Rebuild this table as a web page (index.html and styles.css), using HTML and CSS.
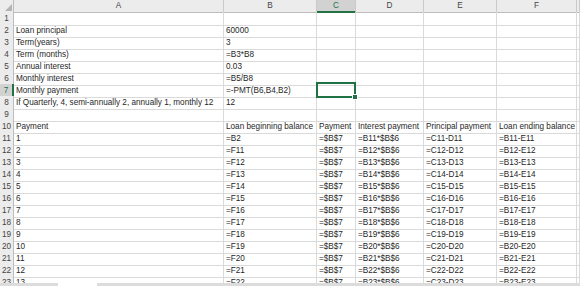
FILE: index.html
```html
<!DOCTYPE html>
<html lang="en">
<head>
    <meta charset="UTF-8">
    <title>Loan amortization</title>
    <link rel="stylesheet" href="styles.css">
</head>
<body>
    <div class="sheet">
        <div class="row head"><div class="corner"><span class="tri"></span></div><div>A</div><div>B</div><div class="sel">C</div><div>D</div><div>E</div><div>F</div><div></div></div>
        <div class="row"><div class="num">1</div><div></div><div></div><div></div><div></div><div></div><div></div><div></div></div>
        <div class="row"><div class="num">2</div><div>Loan principal</div><div>60000</div><div></div><div></div><div></div><div></div><div></div></div>
        <div class="row"><div class="num">3</div><div>Term(years)</div><div>3</div><div></div><div></div><div></div><div></div><div></div></div>
        <div class="row"><div class="num">4</div><div>Term (months)</div><div>=B3*B8</div><div></div><div></div><div></div><div></div><div></div></div>
        <div class="row"><div class="num">5</div><div>Annual interest</div><div>0.03</div><div></div><div></div><div></div><div></div><div></div></div>
        <div class="row"><div class="num">6</div><div>Monthly interest</div><div>=B5/B8</div><div></div><div></div><div></div><div></div><div></div></div>
        <div class="row"><div class="num sel">7</div><div>Monthly payment</div><div>=-PMT(B6,B4,B2)</div><div class="active"></div><div></div><div></div><div></div><div></div></div>
        <div class="row"><div class="num">8</div><div>If Quarterly, 4, semi-annually 2, annually 1, monthly 12</div><div>12</div><div></div><div></div><div></div><div></div><div></div></div>
        <div class="row"><div class="num">9</div><div></div><div></div><div></div><div></div><div></div><div></div><div></div></div>
        <div class="row"><div class="num">10</div><div>Payment</div><div>Loan beginning balance</div><div>Payment</div><div>Interest payment</div><div>Principal payment</div><div>Loan ending balance</div><div></div></div>
        <div class="row"><div class="num">11</div><div>1</div><div>=B2</div><div>=$B$7</div><div>=B11*$B$6</div><div>=C11-D11</div><div>=B11-E11</div><div></div></div>
        <div class="row"><div class="num">12</div><div>2</div><div>=F11</div><div>=$B$7</div><div>=B12*$B$6</div><div>=C12-D12</div><div>=B12-E12</div><div></div></div>
        <div class="row"><div class="num">13</div><div>3</div><div>=F12</div><div>=$B$7</div><div>=B13*$B$6</div><div>=C13-D13</div><div>=B13-E13</div><div></div></div>
        <div class="row"><div class="num">14</div><div>4</div><div>=F13</div><div>=$B$7</div><div>=B14*$B$6</div><div>=C14-D14</div><div>=B14-E14</div><div></div></div>
        <div class="row"><div class="num">15</div><div>5</div><div>=F14</div><div>=$B$7</div><div>=B15*$B$6</div><div>=C15-D15</div><div>=B15-E15</div><div></div></div>
        <div class="row"><div class="num">16</div><div>6</div><div>=F15</div><div>=$B$7</div><div>=B16*$B$6</div><div>=C16-D16</div><div>=B16-E16</div><div></div></div>
        <div class="row"><div class="num">17</div><div>7</div><div>=F16</div><div>=$B$7</div><div>=B17*$B$6</div><div>=C17-D17</div><div>=B17-E17</div><div></div></div>
        <div class="row"><div class="num">18</div><div>8</div><div>=F17</div><div>=$B$7</div><div>=B18*$B$6</div><div>=C18-D18</div><div>=B18-E18</div><div></div></div>
        <div class="row"><div class="num">19</div><div>9</div><div>=F18</div><div>=$B$7</div><div>=B19*$B$6</div><div>=C19-D19</div><div>=B19-E19</div><div></div></div>
        <div class="row"><div class="num">20</div><div>10</div><div>=F19</div><div>=$B$7</div><div>=B20*$B$6</div><div>=C20-D20</div><div>=B20-E20</div><div></div></div>
        <div class="row"><div class="num">21</div><div>11</div><div>=F20</div><div>=$B$7</div><div>=B21*$B$6</div><div>=C21-D21</div><div>=B21-E21</div><div></div></div>
        <div class="row"><div class="num">22</div><div>12</div><div>=F21</div><div>=$B$7</div><div>=B22*$B$6</div><div>=C22-D22</div><div>=B22-E22</div><div></div></div>
        <div class="row"><div class="num">23</div><div>13</div><div>=F22</div><div>=$B$7</div><div>=B23*$B$6</div><div>=C23-D23</div><div>=B23-E23</div><div></div></div>
    </div>
    <div class="tabs"><span class="tab"></span></div>
</body>
</html>
```

FILE: styles.css
```css
body {
    margin: 0;
    font-family: "Liberation Sans", Arial, sans-serif;
    font-size: 8.2px;
    color: #1f1f1f;
    background-color: #fff;
    overflow: hidden;
}
.sheet {
    height: 283px;
    overflow: hidden;
}
.row {
    display: grid;
    grid-template-columns: 14px 210px 93px 39px 68px 73px 80px 1fr;
    height: 12px;
}
.row > div {
    box-sizing: border-box;
    border-right: 1px solid #dadada;
    border-bottom: 1px solid #dadada;
    padding: 1px 0 0 2px;
    line-height: 12px;
    white-space: nowrap;
}
.row > .num {
    padding: 1px 0 0 0;
    background-color: #ececec;
    color: #444;
    text-align: center;
    border-color: #d2d2d2;
    border-right-color: #bdbdbd;
}
.head > div {
    padding: 0;
    line-height: 11px;
    background-color: #ececec;
    color: #444;
    text-align: center;
    border-right-color: #cacaca;
    border-bottom-color: #bdbdbd;
}
.head > .corner {
    display: flex;
    justify-content: flex-end;
    align-items: flex-end;
    padding: 0 1px 1px 0;
    border-right-color: #bdbdbd;
}
.tri {
    width: 7px;
    height: 7px;
    background-color: #b4b4b4;
    clip-path: polygon(100% 0, 100% 100%, 0 100%);
}
.head > .sel {
    background-color: #d2d2d2;
    color: #217346;
    border-bottom: 2px solid #217346;
}
.row > .num.sel {
    background-color: #d2d2d2;
    color: #217346;
    border-right: 2px solid #217346;
}
.active {
    position: relative;
}
.active::after {
    content: "";
    position: absolute;
    left: -1px;
    top: -2px;
    right: -1px;
    bottom: -1px;
    border: 2px solid #217346;
}
.active::before {
    content: "";
    position: absolute;
    right: -3px;
    bottom: -3px;
    width: 4px;
    height: 4px;
    background-color: #217346;
    border: 1px solid #fff;
    z-index: 1;
}
.tabs {
    display: flex;
    height: 3px;
    background-color: #dcdcdc;
}
.tab {
    margin-left: 58px;
    width: 39px;
    background-color: #fff;
}
```
